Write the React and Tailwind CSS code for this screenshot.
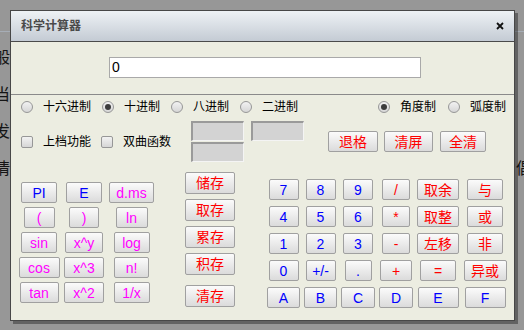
import React from 'react';

const B = 'text-[#0000ff]';
const M = 'text-[#ff00ff]';
const R = 'text-[#ff0000]';

const Btn = ({ w, c, h = 'h-[21px]', children }) => (
  <button
    className={`${w} ${h} ${c} flex items-center justify-center rounded-[2px] border border-[#a0a0a0] bg-linear-to-b from-[#fbfbfb] to-[#dbdbdb] text-[14px] leading-none`}
  >
    {children}
  </button>
);

const Radio = ({ checked, label }) => (
  <label className="flex items-center gap-[10px]">
    <span className="flex h-[12px] w-[12px] items-center justify-center rounded-full border border-[#979797] bg-linear-to-b from-[#f2f2f2] to-[#d6d6d6]">
      {checked && <span className="h-[6px] w-[6px] rounded-full bg-[#3c3c3c]" />}
    </span>
    <span className="text-[12px] leading-none text-black">{label}</span>
  </label>
);

const Check = ({ label }) => (
  <label className="flex items-center gap-[10px]">
    <span className="h-[12px] w-[12px] rounded-[2px] border border-[#979797] bg-linear-to-b from-[#f2f2f2] to-[#d6d6d6]" />
    <span className="text-[12px] leading-none text-black">{label}</span>
  </label>
);

const Slot = () => (
  <div className="h-[20px] w-[53px] border-t-2 border-l-2 border-b border-r border-t-[#9a9a9a] border-l-[#9a9a9a] border-b-[#f4f4f4] border-r-[#f4f4f4] bg-[#d3d3d3]" />
);

const leftRows = [
  [['PI', 'w-[36px]', B], ['E', 'w-[36px]', B], ['d.ms', 'w-[45px]', M]],
  [['(', 'w-[31px]', M], [')', 'w-[30px]', M], ['ln', 'w-[32px]', M]],
  [['sin', 'w-[36px]', M], ['x^y', 'w-[38px]', M], ['log', 'w-[36px]', M]],
  [['cos', 'w-[41px]', M], ['x^3', 'w-[40px]', M], ['n!', 'w-[35px]', M]],
  [['tan', 'w-[39px]', M], ['x^2', 'w-[40px]', M], ['1/x', 'w-[36px]', M]],
];

const rightRows = [
  [['7', 'w-[30px]', B], ['8', 'w-[30px]', B], ['9', 'w-[30px]', B], ['/', 'w-[28px]', R], ['取余', 'w-[42px]', R], ['与', 'w-[36px]', R]],
  [['4', 'w-[30px]', B], ['5', 'w-[30px]', B], ['6', 'w-[30px]', B], ['*', 'w-[28px]', R], ['取整', 'w-[42px]', R], ['或', 'w-[36px]', R]],
  [['1', 'w-[30px]', B], ['2', 'w-[30px]', B], ['3', 'w-[30px]', B], ['-', 'w-[28px]', R], ['左移', 'w-[42px]', R], ['非', 'w-[36px]', R]],
  [['0', 'w-[30px]', B], ['+/-', 'w-[30px]', B], ['.', 'w-[27px]', B], ['+', 'w-[32px]', R], ['=', 'w-[36px]', R], ['异或', 'w-[43px]', R]],
  [['A', 'w-[33px]', B], ['B', 'w-[33px]', B], ['C', 'w-[34px]', B], ['D', 'w-[34px]', B], ['E', 'w-[41px]', B], ['F', 'w-[41px]', B]],
];

export default function App() {
  return (
    <div className="relative h-[330px] w-[524px] overflow-hidden bg-[#979797] font-['Liberation_Sans','Noto_Sans_CJK_SC',sans-serif]">
      {/* page behind the mask */}
      <div className="h-[32px] border-b border-[#a6adb6]" />
      <div className="flex justify-between text-[16px] leading-[16px] text-[#151515]">
        <div className="-ml-[6px] flex flex-col">
          <span className="mt-[18px]">般</span>
          <span className="mt-[21px]">当</span>
          <span className="mt-[21px]">发</span>
          <span className="mt-[21px]">情</span>
        </div>
        <div className="-mr-[8px] flex flex-col">
          <span className="mt-[129px]">倡</span>
        </div>
      </div>

      {/* dialog */}
      <div className="absolute left-[10px] top-[10px] flex h-[311px] w-[505px] flex-col border border-[#474747] bg-[#ecede1] shadow-[3px_3px_0_rgba(0,0,0,0.35)]">
        <div className="flex h-[31px] shrink-0 items-center justify-between border-b border-[#4a4a4a] bg-linear-to-b from-[#eef2f5] to-[#c4cbd4] pl-[10px] pr-[10px]">
          <span className="text-[12px] font-bold text-[#4a4a4a]">科学计算器</span>
          <svg width="8" height="8" viewBox="0 0 8 8">
            <path d="M1 1L7 7M7 1L1 7" stroke="#111" strokeWidth="1.8" />
          </svg>
        </div>

        <div className="flex flex-col">
          <div className="ml-[98px] mt-[15px] flex h-[21px] w-[312px] items-center border border-[#a9a9a9] bg-white pl-[2px] text-[14px] text-black">
            0
          </div>
          <div className="mt-[16px] h-px bg-[#8a8a8a]" />

          <div className="flex h-[24px] items-center gap-[11px] pl-[10px] pr-[8px]">
            <Radio label="十六进制" />
            <Radio checked label="十进制" />
            <Radio label="八进制" />
            <Radio label="二进制" />
            <div className="ml-auto flex gap-[12px]">
              <Radio checked label="角度制" />
              <Radio label="弧度制" />
            </div>
          </div>

          <div className="mt-[2px] flex h-[41px] items-center pl-[10px]">
            <Check label="上档功能" />
            <div className="ml-[10px]">
              <Check label="双曲函数" />
            </div>
            <div className="ml-[20px] grid grid-cols-[53px_53px] gap-x-[7px] gap-y-px self-start">
              <Slot />
              <Slot />
              <Slot />
            </div>
            <div className="ml-[24px] flex gap-[6px]">
              <Btn w="w-[50px]" c={R}>退格</Btn>
              <Btn w="w-[49px]" c={R}>清屏</Btn>
              <div className="ml-px">
                <Btn w="w-[46px]" c={R}>全清</Btn>
              </div>
            </div>
          </div>

          <div className="flex items-start">
            <div className="ml-[6px] mt-[20px] grid grid-cols-[44px_46px_49px] justify-items-center gap-y-[4px]">
              {leftRows.flat().map(([t, w, c], i) => (
                <Btn key={i} w={w} c={c}>{t}</Btn>
              ))}
            </div>

            <div className="ml-[29px] mt-[10px] flex w-[50px] flex-col gap-[5px]">
              <Btn w="w-[50px]" h="h-[22px]" c={R}>储存</Btn>
              <Btn w="w-[50px]" h="h-[22px]" c={R}>取存</Btn>
              <Btn w="w-[50px]" h="h-[22px]" c={R}>累存</Btn>
              <Btn w="w-[50px]" h="h-[22px]" c={R}>积存</Btn>
              <div className="mt-[5px]">
                <Btn w="w-[50px]" h="h-[22px]" c={R}>清存</Btn>
              </div>
            </div>

            <div className="ml-[30px] mt-[17px] grid grid-cols-[37px_37px_38px_38px_46px_48px] justify-items-center gap-y-[6px]">
              {rightRows.flat().map(([t, w, c], i) => (
                <Btn key={i} w={w} c={c}>{t}</Btn>
              ))}
            </div>
          </div>
        </div>
      </div>
    </div>
  );
}
